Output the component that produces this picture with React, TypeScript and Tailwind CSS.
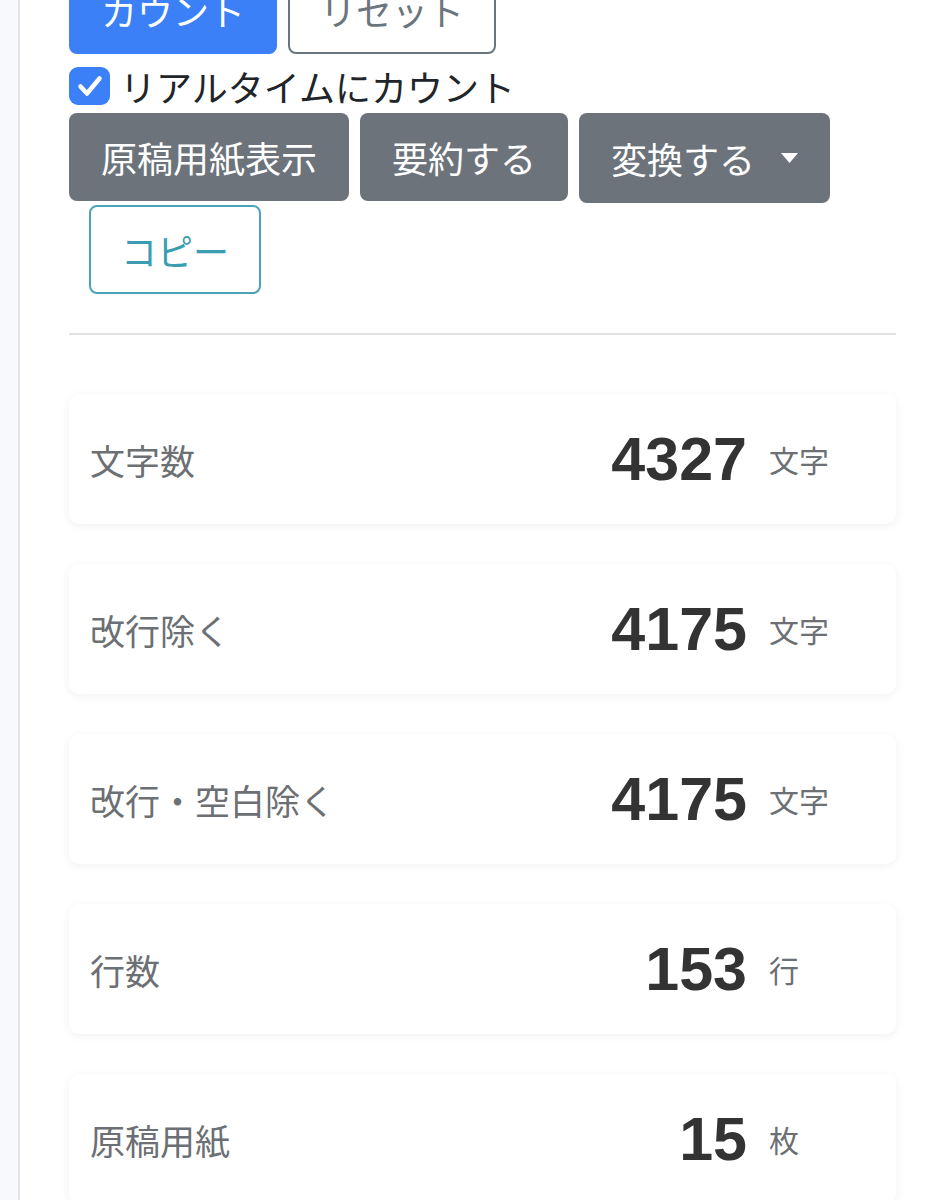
import React from "react";

const jp = "font-['Noto_Sans_CJK_JP','Noto_Sans',sans-serif]";

const stats = [
  { label: "文字数", value: "4327", unit: "文字" },
  { label: "改行除く", value: "4175", unit: "文字" },
  { label: "改行・空白除く", value: "4175", unit: "文字" },
  { label: "行数", value: "153", unit: "行" },
  { label: "原稿用紙", value: "15", unit: "枚" },
];

function StatCard({ label, value, unit }: { label: string; value: string; unit: string }) {
  return (
    <div className="flex h-[130px] items-center rounded-[10px] bg-white pl-[21px] pr-[21px] shadow-[0_2px_10px_rgba(0,0,0,0.06)]">
      <span className={`flex-1 text-[35px] leading-none text-[#6c6f73] ${jp}`}>{label}</span>
      <span className="font-['Liberation_Sans',Arial,sans-serif] text-[61px] font-bold leading-none text-[#333333]">
        {value}
      </span>
      <span className={`ml-[22px] w-[106px] text-[30px] leading-none text-[#6c6f73] ${jp}`}>{unit}</span>
    </div>
  );
}

export default function App() {
  return (
    <div className={`flex min-h-screen overflow-hidden bg-white ${jp}`}>
      {/* left rail */}
      <div className="w-[20px] shrink-0 border-r-2 border-[#e4e4e8] bg-[#f8f9fc]" />

      <div className="flex flex-1 flex-col pl-[49px] pr-[46px]">
        {/* count / reset (scrolled partly off the top) */}
        <div className="-mt-[34px] flex gap-[11px]">
          <button className="flex h-[88px] items-center rounded-[8px] bg-[#3b80f6] px-[32px] text-[36px] leading-none text-white">
            カウント
          </button>
          <button className="flex h-[88px] items-center rounded-[8px] border-2 border-[#6c757d] bg-white px-[30px] text-[36px] leading-none text-[#6c757d]">
            リセット
          </button>
        </div>

        {/* realtime checkbox */}
        <label className="mt-[13px] flex h-[37px] items-center gap-[10px]">
          <span className="flex h-[38px] w-[41px] items-center justify-center rounded-[9px] bg-[#3b80f6]">
            <svg width="26" height="22" viewBox="0 0 26 22" fill="none">
              <path d="M3.5 11.5 L10 18.5 L22.5 3.5" stroke="white" strokeWidth="4.5" strokeLinecap="round" strokeLinejoin="round" />
            </svg>
          </span>
          <span className="text-[36px] leading-none text-[#212529]">リアルタイムにカウント</span>
        </label>

        {/* action buttons */}
        <div className="mt-[9px] flex gap-[11px]">
          <button className="flex h-[88px] items-center rounded-[8px] bg-[#6c737b] px-[32px] text-[36px] leading-none text-white">
            原稿用紙表示
          </button>
          <button className="flex h-[88px] items-center rounded-[8px] bg-[#6c737b] px-[32px] text-[36px] leading-none text-white">
            要約する
          </button>
          <button className="flex h-[90px] items-center rounded-[8px] bg-[#6c737b] pl-[32px] pr-[32px] text-[36px] leading-none text-white">
            変換する
            <svg className="ml-[26px]" width="17" height="10" viewBox="0 0 17 10">
              <path d="M0 0 H17 L8.5 10 Z" fill="white" />
            </svg>
          </button>
        </div>

        <div className="ml-[20px] mt-[2px] flex">
          <button className="flex h-[89px] items-center rounded-[8px] border-2 border-[#4aa3b6] bg-white px-[30px] text-[36px] leading-none text-[#3a9db2]">
            コピー
          </button>
        </div>

        <hr className="mt-[39px] border-t-2 border-[#e3e3e3]" />

        {/* counts */}
        <div className="mt-[59px] flex flex-col gap-[40px]">
          {stats.map((s) => (
            <StatCard key={s.label} {...s} />
          ))}
        </div>
      </div>
    </div>
  );
}
